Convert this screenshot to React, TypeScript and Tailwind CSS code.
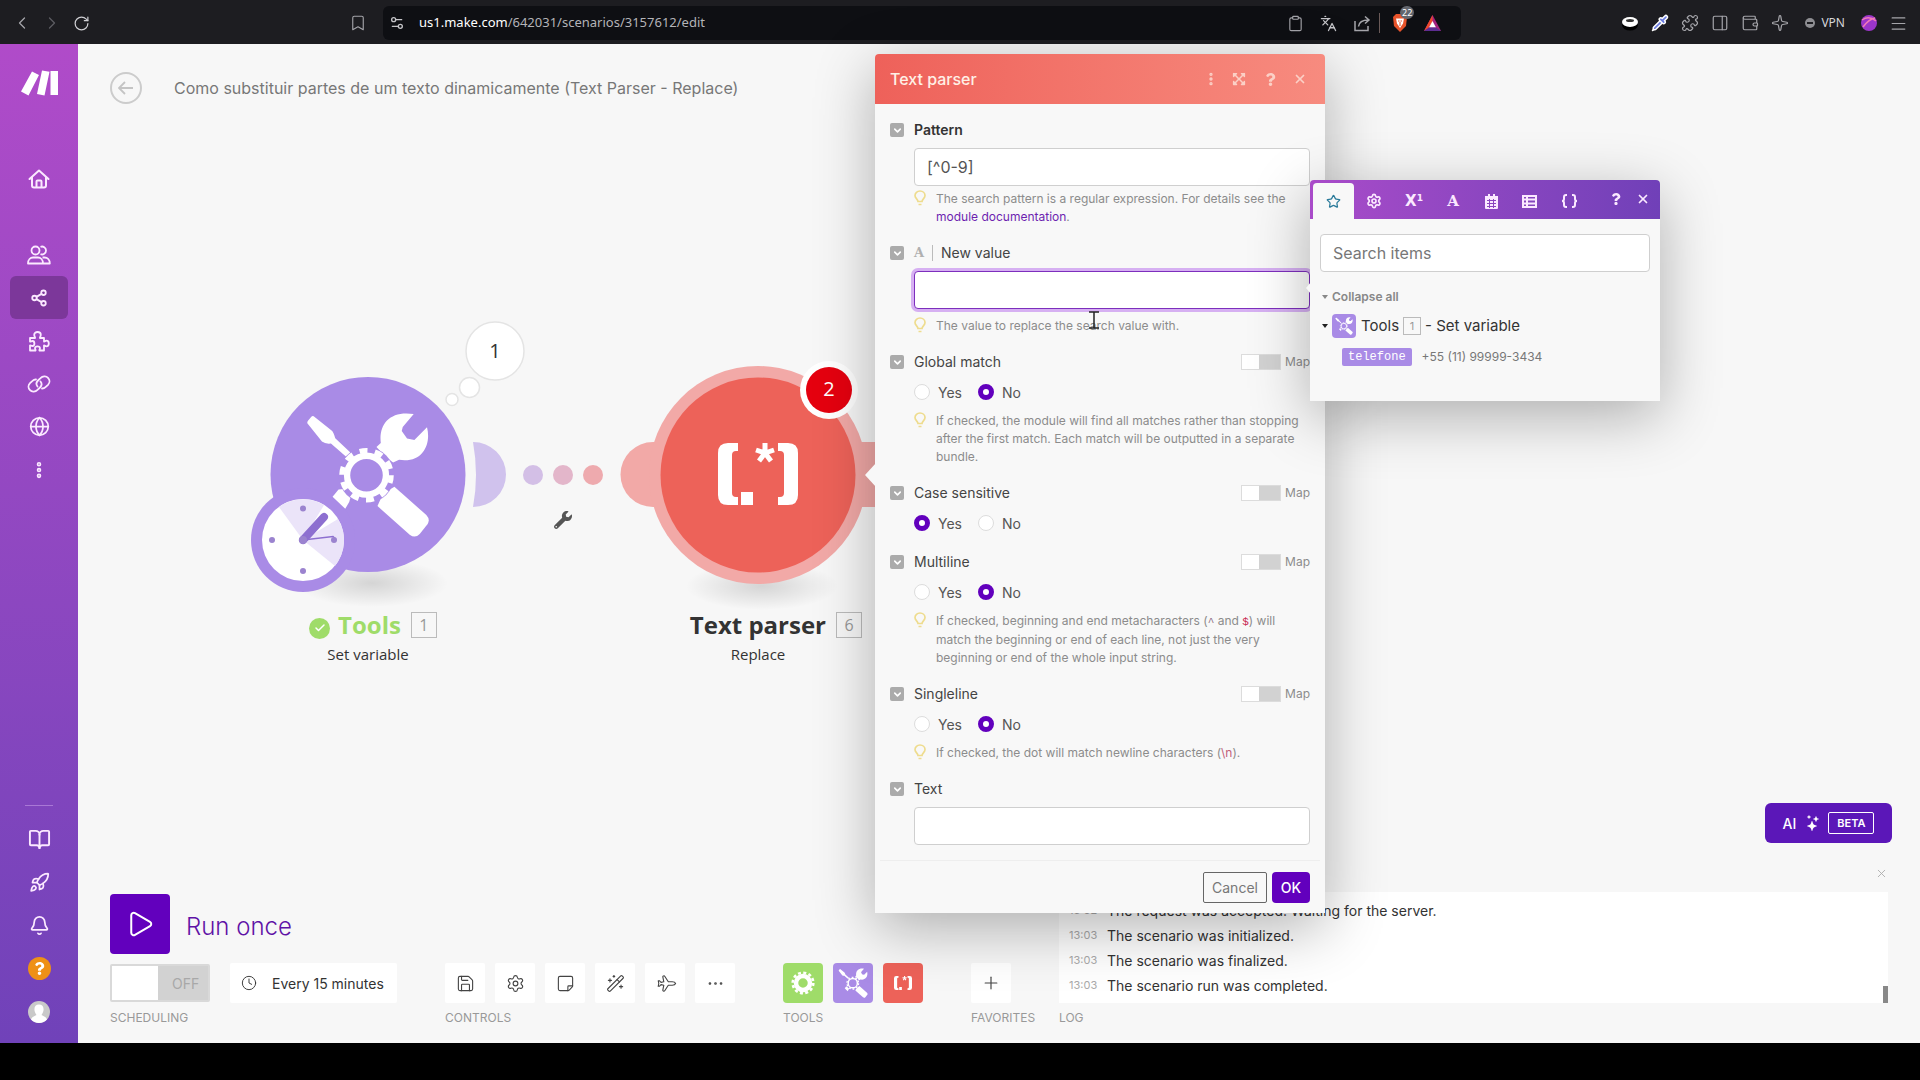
import type { ReactNode } from "react";
import {
  Bell,
  BookOpen,
  Bookmark,
  Check,
  ChevronDown,
  ChevronLeft,
  ChevronRight,
  Clipboard,
  Clock,
  Ellipsis,
  EllipsisVertical,
  Globe,
  Languages,
  Menu,
  PanelRight,
  Pipette,
  Plane,
  Play,
  Plus,
  Puzzle,
  Rocket,
  RotateCw,
  Save,
  Settings,
  Settings2,
  Share2,
  Sparkle,
  Star,
  StickyNote,
  Wallet,
  WandSparkles,
  X,
} from "lucide-react";
import { FaExpandArrowsAlt, FaQuestion, FaWrench } from "react-icons/fa";
import { BsStars } from "react-icons/bs";

function HomeIcon() {
  return (
    <svg width="22" height="20" viewBox="0 0 22 20" fill="none" stroke="currentColor" strokeWidth="2" strokeLinejoin="round" strokeLinecap="round">
      <path d="M1.5 10 11 1.5 20.500 10M4 8v8.500a2 2 0 0 0 2 2h10a2 2 0 0 0 2-2V8M8.500 18v-5.500a1 1 0 0 1 1-1h3a1 1 0 0 1 1 1V18" />
    </svg>
  );
}

function UsersIcon() {
  return (
    <svg width="24" height="20" viewBox="0 0 24 20" fill="none" stroke="currentColor" strokeWidth="1.800" strokeLinejoin="round">
      <circle cx="8.500" cy="5.500" r="4" />
      <path d="M1 18.500c0-4 2.500-6 5-6h5c2.500 0 5 2 5 6zM13.500 1.800a4 4 0 1 1 0 7.400M15.500 12.500h2c3 0 5.300 2.500 5.300 6H16" />
    </svg>
  );
}

function PuzzleIcon() {
  return (
    <svg width="22" height="22" viewBox="0 0 22 22" fill="none" stroke="currentColor" strokeWidth="1.800" strokeLinejoin="round">
      <path d="M2 8h5c.6-.6-.8-1.500-.8-3.200C6.200 3 7.800 2 9.500 2s3.300 1 3.300 2.800c0 1.700-1.400 2.600-.8 3.200h4v3.500c.6.600 1-.8 2.500-.8 1.400 0 2.300 1.200 2.300 2.800s-.9 2.800-2.300 2.800c-1.500 0-1.900-1.400-2.500-.8v5h-4.500c-.6-.6.500-1 .5-2.200 0-1.300-1.200-2-2.500-2s-2.500.7-2.500 2c0 1.200 1.100 1.600.5 2.200H2v-5c.6-.6 1 .5 2.400.5 1.300 0 2-1.200 2-2.500s-.7-2.500-2-2.500c-1.400 0-1.800 1.100-2.400.5z" />
    </svg>
  );
}

function LinkIcon() {
  return (
    <svg width="24" height="18" viewBox="0 0 24 18" fill="none" stroke="currentColor" strokeWidth="1.800" strokeLinecap="round">
      <path d="M13.500 6.500c2 2.500 1 4.500-.5 6l-2.500 2.300c-2 2-5.500 2.500-7.500.4s-2-5 0-7l2.500-2.300c1-1 2.500-1.500 3.500-1.400" />
      <path d="M10.500 11.500c-2-2.500-1-4.500.5-6l2.500-2.300c2-2 5.500-2.500 7.500-.4s2 5 0 7l-2.500 2.300c-1 1-2.500 1.500-3.500 1.400" />
    </svg>
  );
}

function MakeLogo() {
  return (
    <svg width="37" height="26" viewBox="0 0 37 26" fill="#fff">
      <path d="M11 1.500 18 5 7.500 25.500 0 21.500zM21 .5l7.500 1.300L23.500 25.500 16 24zM29.500 1H37v24h-7.500z" />
    </svg>
  );
}

/* Crossed screwdriver and wrench behind a cog */
function ToolsGlyph({ className, base }: { className: string; base: string }) {
  return (
    <svg className={className} viewBox="225 333 376 380" fill="#fff">
      <path d="M244 349Q249 345 254 350L305 391Q311 396 316 414L368 463 354 474 303 430Q286 432 276 424L232 369Q231 364 234 361Z" />
      <path d="M453 428C446 372 480 330 552 341L519 380 516 392 532 415 554 419 592 381C605 430 580 490 508 479L490 487 468 470 440 440Z" />
      <path d="M494 560 590 645Q602 658 594 672L570 702Q556 716 540 704L443 618 460 580Z" />
      <path d="M308 590 326 568 352 566 364 585 358 606 346 626Z" />
      <circle cx="410" cy="525" r="84" fill={base} />
      <circle cx="410" cy="525" r="58.500" fill="none" stroke="#fff" strokeWidth="19" />
      <circle cx="410" cy="525" r="74" fill="none" stroke="#fff" strokeWidth="16" strokeDasharray="24 22.500" />
    </svg>
  );
}

function RegexGlyph({ className }: { className: string }) {
  return (
    <svg className={className} viewBox="0 0 80 62" fill="#fff">
      <path d="M20 0H10Q0 0 0 10V52Q0 62 10 62H20V54H18Q14 54 14 50V12Q14 8 18 8H20ZM60 0H70Q80 0 80 10V52Q80 62 70 62H60V54H62Q66 54 66 50V12Q66 8 62 8H60ZM23 49H35V62H23Z" />
      <path d="M47 10V0M47 10 38 7M47 10 56 7M47 10 41 18M47 10 53 18" stroke="#fff" strokeWidth="5" />
    </svg>
  );
}

function BulbIcon() {
  return (
    <svg className="h-4 w-3 shrink-0" viewBox="0 0 12 16" fill="none" stroke="#eedc8e" strokeWidth="1.700">
      <path d="M4 11.500C4 9 1 8.500 1 5.500a5 4.500 0 0 1 10 0C11 8.500 8 9 8 11.500zM4.500 14.500h3" />
    </svg>
  );
}

function BrowserBar() {
  return (
    <header className="flex h-11 items-center bg-[#1d1d21] pt-0.5 text-[#a5a5aa]">
      <div className="flex w-[383px] shrink-0 items-center pl-3">
        <button aria-label="Back" className="w-[30px]"><ChevronLeft size={20} strokeWidth={1.5} /></button>
        <button aria-label="Forward" className="w-[31px] text-[#5d5d62]"><ChevronRight size={20} strokeWidth={1.5} /></button>
        <button aria-label="Reload" className="text-[#d0d0d4]"><RotateCw size={17} strokeWidth={1.7} /></button>
        <button aria-label="Bookmark" className="mr-4 ml-auto"><Bookmark size={18} strokeWidth={1.5} /></button>
      </div>
      <div className="flex h-[34px] flex-1 items-center rounded-md bg-[#0e0f13] pr-5 pl-1.5">
        <Settings2 size={16} className="text-[#c5c5c9]" />
        <span className="ml-3.5 font-['Noto_Sans'] text-[13px] text-[#b4b4b8]">
          <span className="text-white">us1.make.com</span>/642031/scenarios/3157612/edit
        </span>
        <div className="ml-auto flex items-center">
          <Clipboard size={17} strokeWidth={1.6} />
          <Languages size={17} strokeWidth={1.8} className="ml-4 text-[#c5c5c9]" />
          <svg className="ml-4" width="18" height="17" viewBox="0 0 18 17" fill="none" stroke="currentColor" strokeWidth="1.500">
            <path d="M2 6v9.500h13V11M5.500 11.500C6 7 9 5 15.500 5M12 1.500 16 5l-4 3.500" />
          </svg>
          <span className="ml-2 h-5 w-px bg-[#6a5a58]" />
          <div className="relative ml-3">
            <svg width="16" height="18" viewBox="0 0 16 18">
              <path d="M4 0h8l3 3-1 9-6 6-6-6L1 3z" fill="#e8532a" />
              <path d="M4 4.500h8l-1 5-3 4.500-3-4.500z" fill="#fff" />
              <path d="M6 7h1.500M8.500 7H10M8 8v4" stroke="#e8532a" />
            </svg>
            <span className="absolute -top-2 left-2 rounded-full bg-[#63666e] px-0.5 font-['Noto_Sans'] text-[9px] leading-[13px] text-white">22</span>
          </div>
          <svg className="ml-4" width="17" height="16" viewBox="0 0 17 16">
            <path d="M8.500 0 17 16H0z" fill="#a4217e" />
            <path d="M8.500 0v7L4.500 13 0 16z" fill="#ef4a2b" />
            <path d="M8.500 6 12 12.500H5z" fill="#fff" />
            <path d="M5 12.500h7L17 16H0z" fill="#5c2d91" />
          </svg>
        </div>
      </div>
      <div className="flex w-[459px] shrink-0 items-center justify-end gap-3 pr-3">
        <svg width="18" height="18" viewBox="0 0 18 18">
          <ellipse cx="9" cy="11" rx="8" ry="5.500" fill="#000" />
          <ellipse cx="9" cy="8" rx="8" ry="5" fill="#fff" />
          <ellipse cx="9" cy="6.500" rx="4" ry="1.500" fill="#333" />
        </svg>
        <Pipette size={18} className="fill-[#6a7be0] text-white" />
        <Puzzle size={18} strokeWidth={1.6} />
        <PanelRight size={18} strokeWidth={1.6} />
        <Wallet size={18} strokeWidth={1.6} />
        <Sparkle size={18} strokeWidth={1.6} />
        <button className="flex items-center gap-1.5 px-1 font-['Noto_Sans'] text-[12px] text-[#d6d6da]">
          <span className="flex size-2.5 items-center justify-center rounded-full bg-[#8e8e92]"><span className="h-0.5 w-1.5 bg-[#1d1d21]" /></span>
          VPN
        </button>
        <svg width="16" height="16" viewBox="0 0 16 16">
          <circle cx="8" cy="8" r="8" fill="#9b35c9" />
          <path d="M1 5Q8 0 15 6M2 12Q8 4 14 3" stroke="#f07ab8" strokeWidth="1.500" fill="none" />
        </svg>
        <Menu size={19} strokeWidth={1.5} />
      </div>
    </header>
  );
}

function NavItem({ label, active, children }: { label: string; active?: boolean; children: ReactNode }) {
  return (
    <a
      href="#"
      aria-label={label}
      className={active ? "flex h-[43px] w-[58px] items-center justify-center rounded-md bg-[#7c379a]" : "flex h-[43px] w-[58px] items-center justify-center"}
    >
      {children}
    </a>
  );
}

function Sidebar() {
  return (
    <nav className="flex w-[78px] shrink-0 flex-col items-center bg-linear-to-b from-[#b04bc9] to-[#7042b9] pt-[26px] pb-2.5 text-[#fbe9ff]">
      <MakeLogo />
      <div className="mt-[61px] mb-[33px]"><NavItem label="Organization"><HomeIcon /></NavItem></div>
      <NavItem label="Team"><UsersIcon /></NavItem>
      <NavItem label="Scenarios" active><Share2 size={18} strokeWidth={2.4} /></NavItem>
      <NavItem label="Templates"><PuzzleIcon /></NavItem>
      <NavItem label="Connections"><LinkIcon /></NavItem>
      <NavItem label="Webhooks"><Globe size={21} /></NavItem>
      <NavItem label="More"><EllipsisVertical size={20} strokeWidth={3.5} /></NavItem>
      <span className="mt-auto mb-3 h-px w-7 bg-[#a978d6]" />
      <NavItem label="Resources"><BookOpen size={23} /></NavItem>
      <NavItem label="What's new"><Rocket size={21} /></NavItem>
      <NavItem label="Notifications"><Bell size={21} /></NavItem>
      <NavItem label="Help">
        <span className="flex size-[23px] items-center justify-center rounded-full bg-[#ee9016] text-white"><FaQuestion size={13} /></span>
      </NavItem>
      <NavItem label="Profile">
        <svg width="22" height="22" viewBox="0 0 22 22">
          <circle cx="11" cy="11" r="11" fill="#c9c9c9" />
          <path d="M3 18.500c1-3 4-3.500 5.500-4.500C5 9 6 3.500 11 3.500S17 9 13.500 14c1.500 1 4.500 1.500 5.500 4.500A11 11 0 0 1 3 18.500" fill="#fff" />
        </svg>
      </NavItem>
    </nav>
  );
}

/* Scenario diagram: everything here sits on a free canvas */
function Canvas() {
  return (
    <div className="absolute inset-0 overflow-hidden font-['Open_Sans',sans-serif] text-[#333]">
      <svg className="absolute top-0 left-0" width="860" height="620" viewBox="78 44 860 620">
        <defs>
          <radialGradient id="ground">
            <stop offset="0" stopColor="#000" stopOpacity=".14" />
            <stop offset="1" stopColor="#000" stopOpacity="0" />
          </radialGradient>
        </defs>
        <ellipse cx="372" cy="583" rx="76" ry="24" fill="url(#ground)" />
        <ellipse cx="762" cy="586" rx="76" ry="24" fill="url(#ground)" />
        <path d="M473 442a33 32.500 0 0 1 0 65Q479 475 473 442" fill="#d0c2ed" />
        <circle cx="368" cy="474.500" r="97.500" fill="#a98be6" />
        <circle cx="303" cy="540" r="52" fill="#a98be6" />
        <circle cx="303" cy="540" r="41" fill="#fff" />
        <path d="M303 540 279 507A41 41 0 0 1 324 505zM303 540 338 519A41 41 0 0 1 335 566z" fill="#ebe4f9" />
        <path d="M303 540 324 517" stroke="#8d6fd0" strokeWidth="8" strokeLinecap="round" />
        <path d="M303 540 333 536.500l3 3" stroke="#8d6fd0" strokeWidth="1.500" fill="none" />
        <g fill="#9b83cf">
          <circle cx="303" cy="508.500" r="3" />
          <circle cx="303" cy="571" r="3" />
          <circle cx="272" cy="540" r="3" />
          <circle cx="334" cy="540" r="3" />
          <circle cx="303" cy="540" r="4" />
        </g>
        <g fill="#fff" stroke="#e4e4e4" strokeWidth="1.500">
          <circle cx="495" cy="351" r="29" />
          <circle cx="469.500" cy="387.500" r="10" />
          <circle cx="452" cy="399.500" r="6" />
        </g>
        <circle cx="533" cy="475" r="10" fill="#d3bfe6" />
        <circle cx="563" cy="475" r="10" fill="#e3b6ca" />
        <circle cx="593" cy="475" r="10" fill="#eeaaae" />
        <path d="M656 442h-3a32.500 32.500 0 0 0 0 65h3z" fill="#f2a9a7" />
        <path d="M860 442h40v65h-40z" fill="#f2a9a7" />
        <circle cx="758" cy="475" r="109" fill="#f2a9a7" />
        <circle cx="758" cy="475" r="97.500" fill="#ed6259" />
        <circle cx="829" cy="390" r="29" fill="#fff" />
        <circle cx="829" cy="390" r="23" fill="#e5000f" />
      </svg>
      <ToolsGlyph className="absolute top-[367px] left-[227px] h-[127px] w-[125px]" base="#a98be6" />
      <RegexGlyph className="absolute top-[399px] left-[640px] h-[62px] w-[80px]" />
      <FaWrench size={18} className="absolute top-[467px] left-[476px] text-[#555]" />
      <span className="absolute top-[292px] left-[387px] w-[60px] text-center text-[20px] leading-[30px]">1</span>
      <span className="absolute top-[330px] left-[721px] w-[60px] text-center text-[20px] leading-[30px] text-white">2</span>

      <div className="absolute top-[564px] left-[165px] flex w-[250px] flex-col items-center">
        <div className="flex items-center pl-2.5">
          <span className="mt-1.5 mr-2 flex size-[21px] items-center justify-center rounded-full bg-[#9fdc69] text-white"><Check size={12} strokeWidth={3} /></span>
          <span className="text-[24px] leading-[34px] font-bold text-[#9fdc69]">Tools</span>
          <span className="ml-2.5 flex size-[26px] items-center justify-center border border-[#bbb] text-[16px] text-[#999]">1</span>
        </div>
        <span className="text-[15px] leading-6">Set variable</span>
      </div>
      <div className="absolute top-[564px] left-[590px] flex w-[216px] flex-col items-center">
        <div className="flex items-center self-end pr-[22px]">
          <span className="text-[24px] leading-[34px] font-bold">Text parser</span>
          <span className="ml-2.5 flex size-[26px] items-center justify-center border border-[#bbb] text-[16px] text-[#999]">6</span>
        </div>
        <span className="pr-9 text-[15px] leading-6">Replace</span>
      </div>
    </div>
  );
}

function Hint({ tight, children }: { tight?: boolean; children: ReactNode }) {
  return (
    <div className={tight ? "mt-1 flex gap-2.5" : "mt-2 flex gap-2.5"}>
      <BulbIcon />
      <p className="text-[12px] leading-[18px] text-[#8c8c8c]">{children}</p>
    </div>
  );
}

type FieldProps = { id: string; label: ReactNode; map?: boolean; bold?: boolean; children: ReactNode };

function Field({ id, label, map, bold, children }: FieldProps) {
  return (
    <div className="flex gap-2.5">
      <button aria-label="Toggle field" className="mt-1 flex size-3.5 shrink-0 items-center justify-center rounded-xs bg-[#ababab] text-white">
        <ChevronDown size={11} strokeWidth={3.5} />
      </button>
      <div className="flex-1">
        <div className="mb-2 flex h-[21px] items-center justify-between">
          <label htmlFor={id} className={bold ? "flex items-center text-[14px] font-semibold text-[#333]" : "flex items-center text-[14px] text-[#444]"}>
            {label}
          </label>
          {map && (
            <label className="flex items-center gap-1 text-[12px] text-[#8c8c8c]">
              <input
                type="checkbox"
                className="h-4 w-10 appearance-none border border-[#dcdcdc] bg-[#d2d2d2] before:block before:h-full before:w-[17px] before:bg-white"
              />
              Map
            </label>
          )}
        </div>
        {children}
      </div>
    </div>
  );
}

function YesNo({ name, value }: { name: string; value: "Yes" | "No" }) {
  return (
    <div className="flex h-6 items-center">
      {["Yes", "No"].map((option) => (
        <label key={option} className="flex w-16 items-center gap-2 text-[14px] text-[#555]">
          <input
            type="radio"
            id={option === "Yes" ? name : undefined}
            name={name}
            defaultChecked={option === value}
            className="size-4 appearance-none rounded-full border border-[#ddd] bg-white checked:border-5 checked:border-[#6200bd]"
          />
          {option}
        </label>
      ))}
    </div>
  );
}

const inputClass = "block h-[38px] w-full rounded-sm border border-[#cfcfcf] bg-white px-3 text-[16px] text-[#555] outline-none";

function ModuleDialog() {
  return (
    <section className="absolute top-[10px] left-[797px] w-[450px] rounded-t bg-[#f8f8f8] shadow-[0_15px_60px_rgba(0,0,0,0.3)]">
      <header className="flex h-[50px] items-center rounded-t bg-linear-to-r from-[#ee615a] to-[#f78b7f] pr-[18px] pl-[15px] text-[#fff0e6]">
        <h2 className="text-[16px] font-medium">Text parser</h2>
        <div className="ml-auto flex items-center text-[#fbd0c6]">
          <button aria-label="Options" className="mr-[13px]"><EllipsisVertical size={16} strokeWidth={3} /></button>
          <button aria-label="Expand" className="mr-[18px]"><FaExpandArrowsAlt size={14} /></button>
          <button aria-label="Help" className="mr-4"><FaQuestion size={13} /></button>
          <button aria-label="Close"><X size={14} strokeWidth={3} /></button>
        </div>
      </header>
      <div className="flex flex-col gap-4 px-[15px] py-[15px]">
        <Field id="pattern" label="Pattern" bold>
          <input id="pattern" defaultValue="[^0-9]" className={inputClass} />
          <Hint tight>
            The search pattern is a regular expression. For details see the{" "}
            <a href="#" className="text-[#6d1fb0]">module documentation</a>.
          </Hint>
        </Field>
        <Field
          id="newValue"
          label={
            <>
              <span className="w-[18px] font-['DejaVu_Serif'] text-[13px] font-bold text-[#b0b0b0]">A</span>
              <span className="mr-2 h-4 w-px bg-[#bbb]" />
              New value
            </>
          }
        >
          <input
            id="newValue"
            className="block h-[38px] w-full rounded-sm border border-[#7d2fbd] bg-white px-3 text-[16px] ring-[3px] ring-[#d6b0f2] outline-none"
          />
          <Hint>The value to replace the search value with.</Hint>
        </Field>
        <Field id="globalMatch" label="Global match" map>
          <YesNo name="globalMatch" value="No" />
          <Hint>If checked, the module will find all matches rather than stopping after the first match. Each match will be outputted in a separate bundle.</Hint>
        </Field>
        <Field id="caseSensitive" label="Case sensitive" map>
          <YesNo name="caseSensitive" value="Yes" />
        </Field>
        <Field id="multiline" label="Multiline" map>
          <YesNo name="multiline" value="No" />
          <Hint>
            If checked, beginning and end metacharacters (<code className="font-['Liberation_Mono'] text-[11px] text-[#8a6a80]">^</code> and{" "}
            <code className="font-['Liberation_Mono'] text-[11px] text-[#c7254e]">$</code>) will match the beginning or end of each line, not just the very
            beginning or end of the whole input string.
          </Hint>
        </Field>
        <Field id="singleline" label="Singleline" map>
          <YesNo name="singleline" value="No" />
          <Hint>
            If checked, the dot will match newline characters (<span className="text-[#c0607a]">\n</span>).
          </Hint>
        </Field>
        <Field id="text" label="Text">
          <input id="text" className={inputClass} />
        </Field>
      </div>
      <footer className="mx-[5px] flex justify-end gap-[5px] border-t border-[#eee] px-2.5 pt-[11px] pb-2.5 text-[14px]">
        <button className="h-[31px] w-16 rounded-xs border border-[#666] text-[#777]">Cancel</button>
        <button className="h-[31px] w-[38px] rounded-sm bg-[#6200bd] font-medium text-white">OK</button>
      </footer>
      {/* arrow towards the module */}
      <svg className="absolute top-[409px] -left-2.5" width="11" height="24" viewBox="0 0 11 24" fill="#f8f8f8">
        <path d="M11 0v24L0 12z" />
      </svg>
      <svg className="absolute top-[257px] left-[214px]" width="10" height="18" viewBox="0 0 10 18" fill="none" stroke="#222" strokeWidth="1.500">
        <path d="M0 1h10M0 17h10M5 1v16" />
      </svg>
    </section>
  );
}

function ItemPicker() {
  return (
    <section className="absolute top-[136px] left-[1232px] w-[350px] rounded-t bg-[#f8f8f8] pb-[35px] shadow-[0_15px_60px_rgba(0,0,0,0.3)]">
      <header className="flex h-[39px] items-end rounded-t bg-linear-to-r from-[#a94bc9] to-[#7040b8] pr-2.5 pl-[3px] text-[#fbe9ff]">
        <button aria-label="Favorites" className="flex h-9 w-[41px] items-center justify-center rounded-t bg-[#f8f8f8] text-[#2a7a9a]"><Star size={15} /></button>
        <button aria-label="General" className="flex h-9 w-10 items-center justify-center"><Settings size={16} strokeWidth={2.5} /></button>
        <button aria-label="Math" className="h-9 w-10 font-['DejaVu_Sans'] text-[15px] font-bold">
          X<sup className="text-[9px]">1</sup>
        </button>
        <button aria-label="Text" className="h-9 w-[38px] font-['DejaVu_Serif'] text-[15px] font-bold">A</button>
        <button aria-label="Dates" className="flex h-9 w-[38px] items-center justify-center">
          <svg width="13" height="15" viewBox="0 0 13 15" fill="currentColor">
            <path d="M3 0h2v2h3V0h2v2h3v12a1 1 0 0 1-1 1H1a1 1 0 0 1-1-1V2h3z" />
            <path d="M2 6.500h9M2 9.500h9M2 12.500h9M4.500 5v9M8.500 5v9" stroke="#8c45c0" fill="none" />
          </svg>
        </button>
        <button aria-label="Arrays" className="flex h-9 w-[38px] items-center justify-center">
          <svg width="15" height="13" viewBox="0 0 15 13" fill="none" stroke="currentColor" strokeWidth="2">
            <path d="M1 1h13v11H1zM1 4.500h13M1 8.500h13M5 1v11" />
          </svg>
        </button>
        <button aria-label="Variables" className="flex h-9 w-[42px] items-center justify-center">
          <svg width="17" height="14" viewBox="0 0 17 14" fill="none" stroke="currentColor" strokeWidth="2">
            <path d="M6 1H5Q3 1 3 3v2Q3 7 1 7q2 0 2 2v2q0 2 2 2h1M11 1h1q2 0 2 2v2q0 2 2 2-2 0-2 2v2q0 2-2 2h-1" />
          </svg>
        </button>
        <button aria-label="Help" className="ml-auto flex h-10 items-center"><FaQuestion size={12} /></button>
        <button aria-label="Close" className="ml-3.5 flex h-10 items-center"><X size={14} strokeWidth={3} /></button>
      </header>
      <div className="px-2.5 pt-[15px]">
        <input
          aria-label="Search items"
          placeholder="Search items"
          className="block h-[38px] w-full rounded-sm border border-[#cfcfcf] bg-white px-3 text-[16px] outline-none placeholder:text-[#777]"
        />
        <button className="mt-4 flex h-[18px] items-center text-[12px] font-semibold text-[#888]">
          <svg width="6" height="4" className="mr-1 ml-0.5" fill="#888"><path d="M0 0h6L3 4z" /></svg>
          Collapse all
        </button>
        <div className="mt-2 flex h-6 items-center text-[15px] text-[#333]">
          <svg width="6" height="4" className="mr-1 ml-0.5" fill="#222"><path d="M0 0h6L3 4z" /></svg>
          <span className="flex size-6 items-center justify-center rounded-sm bg-[#a98be6]"><ToolsGlyph className="size-[18px]" base="#a98be6" /></span>
          <span className="ml-[5px]">Tools</span>
          <span className="mx-1 flex size-[18px] items-center justify-center border border-[#bbb] text-[11px] text-[#999]">1</span>
          - Set variable
        </div>
        <div className="mt-2.5 ml-[22px] flex items-center">
          <span className="flex h-[18px] items-center rounded-xs bg-[#a98be6] px-1.5 font-['Liberation_Mono'] text-[12px] text-white">telefone</span>
          <span className="ml-2.5 text-[12px] text-[#777]">+55 (11) 99999-3434</span>
        </div>
      </div>
      {/* arrow towards the edited field */}
      <svg className="absolute top-[102px] -left-1" width="5" height="12" viewBox="0 0 5 12" fill="#f8f8f8">
        <path d="M5 0v12L0 6z" />
      </svg>
    </section>
  );
}

function GroupLabel({ children }: { children: ReactNode }) {
  return <div className="mt-[7px] text-[12px] leading-4 text-[#999]">{children}</div>;
}

const tileClass = "flex size-10 items-center justify-center rounded-xs bg-white text-[#444]";

const controls = [
  { label: "Save", Icon: Save, turn: "" },
  { label: "Scenario settings", Icon: Settings, turn: "" },
  { label: "Notes", Icon: StickyNote, turn: "-scale-y-100" },
  { label: "Auto-align", Icon: WandSparkles, turn: "" },
  { label: "Explain flow", Icon: Plane, turn: "rotate-45" },
  { label: "More", Icon: Ellipsis, turn: "" },
];

const logLines = [
  { time: "13:02", text: "The request was accepted. Waiting for the server." },
  { time: "13:03", text: "The scenario was initialized." },
  { time: "13:03", text: "The scenario was finalized." },
  { time: "13:03", text: "The scenario run was completed." },
];

function BottomBar() {
  return (
    <div className="relative mt-auto flex items-end pr-8 pb-[17px] pl-8">
      <div className="w-[287px] shrink-0">
        <button className="mb-[9px] flex items-center gap-4 text-[24px] font-light text-[#5f12a6]">
          <span className="flex size-[60px] items-center justify-center rounded-sm bg-[#6200bd] text-white"><Play size={30} strokeWidth={1.6} /></span>
          <span className="pt-1.5">Run once</span>
        </button>
        <div className="flex h-10 items-center justify-between">
          <button role="switch" aria-checked="false" className="flex h-[38px] w-[100px] items-center rounded-xs border-2 border-[#d9d9d9] bg-[#d2d2d2] text-[14px] text-[#a8a8a8]">
            <span className="mr-3.5 h-full w-[46px] bg-white" />
            OFF
          </button>
          <button className="flex h-10 w-[167px] items-center gap-[15px] rounded-xs bg-white pl-[11px] text-[14px] text-[#333]">
            <Clock size={16} strokeWidth={1.4} />
            Every 15 minutes
          </button>
        </div>
        <GroupLabel>SCHEDULING</GroupLabel>
      </div>
      <div className="ml-12 shrink-0">
        <div className="flex gap-2.5">
          {controls.map(({ label, Icon, turn }) => (
            <button key={label} aria-label={label} className={tileClass}>
              <Icon size={19} strokeWidth={1.4} className={turn} />
            </button>
          ))}
        </div>
        <GroupLabel>CONTROLS</GroupLabel>
      </div>
      <div className="ml-12 shrink-0">
        <div className="flex gap-2.5">
          <button aria-label="Flow control" className="flex size-10 items-center justify-center rounded-sm bg-[#9fdc69]">
            <svg width="24" height="24" viewBox="0 0 24 24" fill="none" stroke="#fff">
              <circle cx="12" cy="12" r="7" strokeWidth="4.500" />
              <circle cx="12" cy="12" r="10.300" strokeWidth="2.600" strokeDasharray="3 2.390" />
            </svg>
          </button>
          <button aria-label="Tools" className="flex size-10 items-center justify-center rounded-sm bg-[#a98be6]"><ToolsGlyph className="size-[30px]" base="#a98be6" /></button>
          <button aria-label="Text parser" className="flex size-10 items-center justify-center rounded-sm bg-[#ed6259]"><RegexGlyph className="h-3.5 w-[18px]" /></button>
        </div>
        <GroupLabel>TOOLS</GroupLabel>
      </div>
      <div className="ml-12 w-16 shrink-0">
        <button aria-label="Add favorite" className={tileClass}><Plus size={20} strokeWidth={1.4} /></button>
        <GroupLabel>FAVORITES</GroupLabel>
      </div>
      <div className="ml-6 flex flex-1 flex-col">
        <button aria-label="Close log" className="mb-2.5 self-end text-[#aaa]"><X size={13} strokeWidth={1.6} className="my-0.5" /></button>
        <div className="flex h-[111px] items-end justify-between bg-white">
          <ul className="pb-[5px] pl-2.5">
            {logLines.map(({ time, text }, i) => (
              <li key={i} className="flex h-[25px] items-center text-[14px] text-[#333]">
                <span className="w-[38px] text-[11px] text-[#aaa]">{time}</span>
                {text}
              </li>
            ))}
          </ul>
          <span className="h-[17px] w-[5px] bg-[#888]" />
        </div>
        <GroupLabel>LOG</GroupLabel>
      </div>
    </div>
  );
}

export default function App() {
  return (
    <div className="flex min-h-screen flex-col bg-black font-['Inter',sans-serif]">
      <BrowserBar />
      <div className="flex flex-1">
        <Sidebar />
        <main className="relative flex flex-1 flex-col bg-[#f7f7f7]">
          <Canvas />
          <div className="relative flex items-center gap-8 pt-7 pl-8">
            <button aria-label="Back to scenarios" className="flex size-8 items-center justify-center rounded-full border-2 border-[#ccc] text-[#c4c4c4]">
              <svg width="16" height="14" viewBox="0 0 16 14" fill="none" stroke="currentColor" strokeWidth="1.800"><path d="M15 7H1M7 1 1 7l6 6" /></svg>
            </button>
            <h1 className="text-[16px] text-[#777]">Como substituir partes de um texto dinamicamente (Text Parser - Replace)</h1>
          </div>
          <BottomBar />
          <button className="absolute right-7 bottom-[200px] flex h-10 w-[127px] items-center justify-center gap-2 rounded-md bg-[#5b17b8] text-[14px] font-medium text-white">
            AI
            <BsStars size={16} className="-scale-x-100" />
            <span className="rounded-xs border border-white px-2 text-[11px] leading-5 font-semibold">BETA</span>
          </button>
          <ModuleDialog />
          <ItemPicker />
        </main>
      </div>
      <div className="h-[37px] bg-black" />
    </div>
  );
}
